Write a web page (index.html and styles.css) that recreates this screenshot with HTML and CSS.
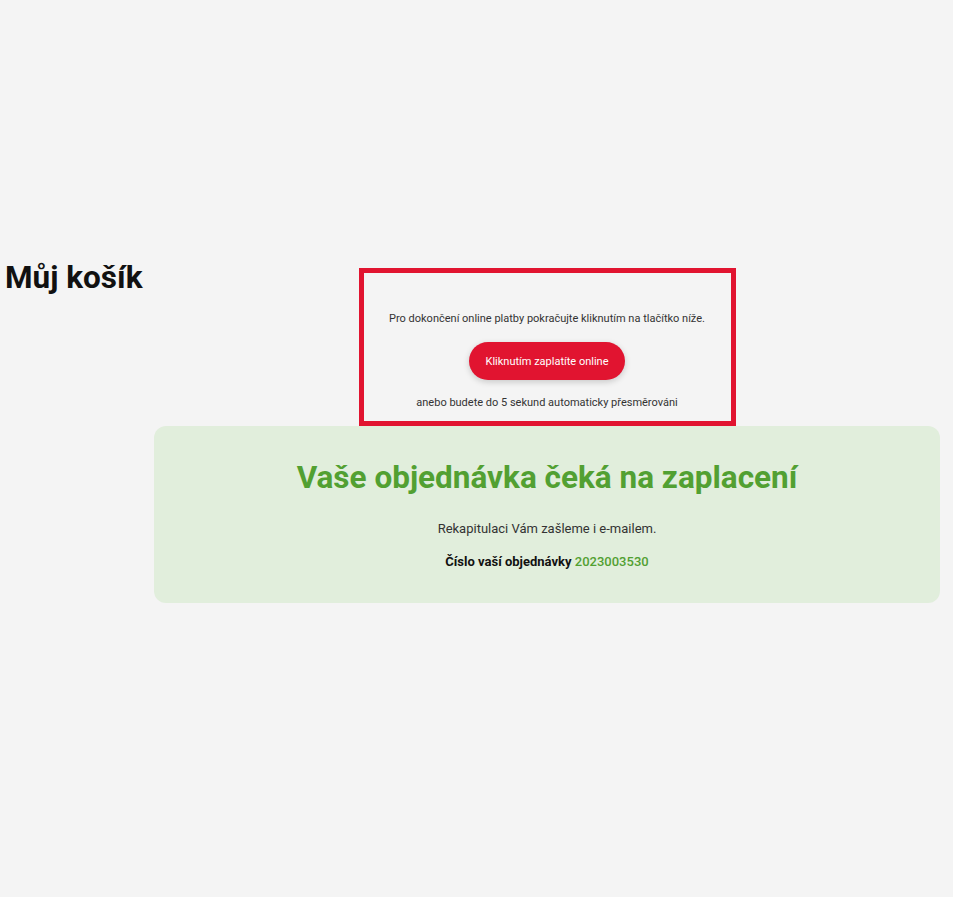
FILE: index.html
```html
<!DOCTYPE html>
<html lang="cs">
<head>
    <meta charset="UTF-8">
    <meta name="viewport" content="width=device-width, initial-scale=1.0">
    <title>Můj košík</title>
    <link rel="stylesheet" href="styles.css">
</head>
<body>
    <div class="page">
        <h1 class="page-title">Můj košík</h1>
        <div class="payment">
            <p class="payment-text">Pro dokončení online platby pokračujte kliknutím na tlačítko níže.</p>
            <button class="pay-button">Kliknutím zaplatíte online</button>
            <p class="payment-text">anebo budete do 5 sekund automaticky přesměrováni</p>
        </div>
        <div class="order-box">
            <h2 class="order-title">Vaše objednávka čeká na zaplacení</h2>
            <p class="order-text">Rekapitulaci Vám zašleme i e-mailem.</p>
            <p class="order-number">Číslo vaší objednávky <span class="num">2023003530</span></p>
        </div>
    </div>
</body>
</html>
```

FILE: styles.css
```css
body {
    margin: 0;
    background: #f4f4f4;
    font-family: Roboto, "Liberation Sans", Arial, sans-serif;
    color: #333;
}
.page {
    display: grid;
    grid-template-columns: 154px 786px;
    padding-top: 258px;
}
.page-title {
    grid-column: 1;
    grid-row: 1;
    margin: 0;
    padding-left: 5px;
    font-size: 31.5px;
    font-weight: 700;
    line-height: 40px;
    color: #111;
    white-space: nowrap;
}
.payment {
    grid-column: 2;
    grid-row: 1;
    justify-self: center;
    margin-top: 10px;
    width: 367px;
    border: 5px solid #e11430;
    padding: 38px 0 10px;
    text-align: center;
}
.payment-text {
    margin: 0;
    font-size: 11px;
    line-height: 16px;
    color: #333;
}
.pay-button {
    margin: 15px 0 15px;
    width: 156px;
    height: 38px;
    border: none;
    border-radius: 19px;
    background: #e11430;
    color: #fff;
    font-family: inherit;
    font-size: 11px;
    font-weight: 400;
    box-shadow: 0 2px 6px rgba(0, 0, 0, 0.18);
    cursor: pointer;
}
.order-box {
    grid-column: 2;
    grid-row: 2;
    background: #e1eedc;
    border-radius: 12px;
    padding: 34px 20px 33px;
    text-align: center;
}
.order-title {
    margin: 0 0 25px;
    font-size: 31.5px;
    line-height: 36px;
    font-weight: 700;
    color: #52a032;
}
.order-text {
    margin: 0 0 17px;
    font-size: 13px;
    line-height: 16px;
}
.order-number {
    margin: 0;
    font-size: 13px;
    line-height: 16px;
    font-weight: 700;
    color: #111;
}
.num {
    color: #52a032;
    font-weight: 500;
}
```
